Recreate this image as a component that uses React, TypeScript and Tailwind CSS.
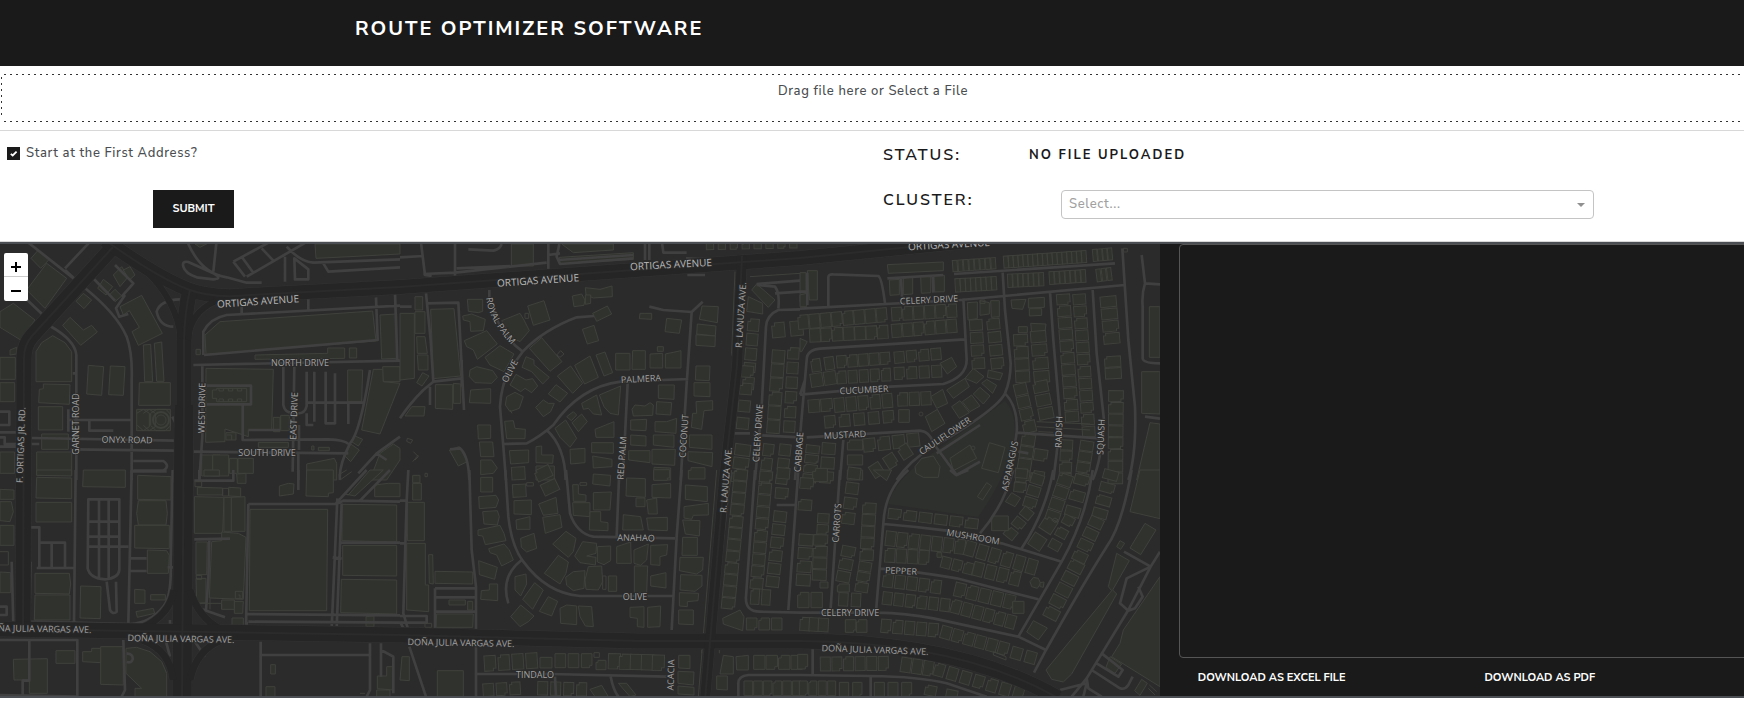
import React from "react";

type Row = [number, number, number, number, number, number, number];
interface Tile {
  x: number;
  y: number;
  shapes: string[];
  rows: Row[];
  roads: string;
  thin?: string;
}

// Each tile is drawn at three units per screen pixel.
const tiles: Tile[] = [
  {
    x: 0,
    y: 240,
    shapes: [
      "140,70 200,115 135,205 80,150",
      "40,190 105,240 62,300 0,262 0,215",
      "115,30 148,58 122,85 93,55",
      "108,425 108,335 125,308 158,287 195,308 215,335 215,425",
      "118,448 130,446 130,432 210,434 208,493 116,488",
      "115,500 188,500 188,570 115,570",
      "125,582 205,582 205,628 125,628",
      "110,636 215,636 215,706 110,706",
      "265,376 311,380 305,466 260,462",
      "331,378 375,380 370,466 326,464",
      "418,428 511,428 511,496 416,496",
      "430,315 452,313 458,425 434,425",
      "463,310 485,306 492,424 470,424",
      "210,232 250,270 275,256 292,276 242,316 188,256",
      "360,200 425,166 487,280 415,316 396,275 418,262 388,212 370,225",
      "250,160 275,180 252,206 228,184",
      "0,352 46,352 46,418 0,418",
      "0,428 44,428 44,485 0,485",
      "0,636 44,636 44,700 0,700",
      "30,330 50,322 50,342 30,345",
      "615,285 660,245 1118,213 1128,303 618,343",
      "618,385 820,388 815,570 745,570 745,590 675,567 675,605 617,607",
      "945,12 1200,12 1200,42 1050,50 948,55",
      "1140,225 1190,222 1190,355 1145,357",
      "765,345 983,340 983,324 1034,324 1034,355 765,358",
      "1048,324 1070,324 1070,354 1048,354",
      "588,328 601,328 601,344 588,344",
      "1043,390 1088,390 1085,485 1043,485",
      "1120,388 1150,388 1150,425 1200,430 1140,582 1085,570",
      "1148,380 1200,380 1200,425 1150,425",
      "410,508 511,508 511,572 410,572",
      "340,105 365,80 385,110 360,140",
      "310,118 338,140 318,165 293,145",
      "345,148 365,168 345,185 328,165",
      "370,90 390,80 405,105 388,120",
      "605,645 660,645 660,708 605,708",
      "638,645 686,645 686,708 638,708",
      "688,655 712,655 712,700 688,700",
      "714,655 760,655 760,700 714,700",
      "820,532 840,532 840,575 820,575",
      "842,526 868,526 868,572 842,572",
      "775,607 865,607 865,622 775,622",
      "678,578 708,578 708,600 678,600",
      "920,672 1003,655 1010,670 1010,720 920,720",
      "1065,588 1088,598 1075,618 1056,606",
      "1052,612 1078,630 1052,665 1035,648",
      "1140,640 1180,612 1200,625 1200,660 1160,720 1110,720",
      "955,622 988,622 988,632 955,632",
      "935,618 942,618 942,630 935,630",
      "585,12 620,12 600,22",
    ],
    rows: [],
    roads:
      "M195 90L250 140Q350 220 380 290Q398 340 395 420V720M150 258Q225 300 229 345V720M50 150L145 240M75 0L232 124M275 0L195 85M205 508V575M205 540H395M268 540V572H340M95 594L525 602M212 628L525 632M400 663H490Q512 678 490 692H400M0 515H28V555H0M0 577H60M0 592H14V612H118M0 620H50M550 80Q545 62 565 66L640 100Q670 116 640 118L590 112Q555 100 550 80M560 0Q600 100 680 112L740 128H785M650 0L640 95M700 65L820 0M740 110L930 0M700 65L735 110M725 50L760 98M785 25L820 62M855 50V125M883 55L925 88V118H885ZM860 20Q900 65 940 68L1200 58M970 70L985 95L1200 82M610 345V275Q630 235 680 225L1200 197M1128 172L1133 300L612 345M1185 160L1192 360M580 375L1200 362M607 375V590L598 720M883 380L878 695M850 380V495Q855 520 880 518M920 395V498Q915 520 895 520M943 395V545M977 395V550H1005V400M1045 490V552M920 488H1090M920 520V555H940M1110 390Q1080 580 1050 610Q1015 680 1020 720M728 495V600L985 598Q1035 600 1045 612M580 635L1045 640M620 437H753V493H620M745 570H840M1200 590L1130 640L1075 700M520 260Q480 260 470 215Q480 180 540 178M345 75L400 130L365 170M270 105L345 182M375 165L348 205L358 230L385 222M925 210V175M725 220V200M1130 640L1160 660M897 555V630M895 640V720M517 530L532 560M218 400H230",
    thin:
      "M410 520L430 508L448 520V560L430 572L412 556M430 520L448 508L466 520V560L448 572L430 556M452 520L470 508H498L511 522V558L496 572H468L452 556ZM637 450H650V445H740V485H650V475H637ZM657 445V453H670V445M685 445V453H698V445M712 445V453H725V445M657 485V477H670V485M685 485V477H698V485M712 485V477H725V485M680 585H695V600",
  },
  {
    x: 400,
    y: 240,
    shapes: [
      "0,220 43,220 43,415 0,420",
      "92,208 162,206 182,408 100,416",
      "45,170 68,170 68,210 45,210",
      "45,215 75,215 75,280 45,280",
      "50,290 75,290 82,340 52,340",
      "52,345 84,345 84,390 55,390",
      "68,398 87,408 66,438 50,428",
      "106,434 158,434 158,508 106,505",
      "160,430 182,432 182,490 160,490",
      "35,500 75,500 72,528 15,528",
      "202,178 248,178 248,214 235,218 205,214",
      "188,228 215,222 256,238 250,272 212,274 210,245 190,240",
      "305,242 360,220 372,240 388,272 360,305 330,290",
      "383,198 432,182 450,240 400,256",
      "193,302 260,272 292,312 232,358 220,330 200,320",
      "255,352 300,317 342,342 312,395 270,375",
      "388,325 425,293 486,365 450,394",
      "366,382 378,350 402,360 402,374 448,412 428,432 395,395",
      "330,435 348,403 378,420 398,416 413,438 395,458 375,445 362,455",
      "578,220 622,198 635,222 590,244",
      "547,268 582,256 596,302 562,312",
      "517,168 545,162 555,180 552,196 522,200",
      "556,143 600,148 636,138 637,170 580,174 558,165",
      "556,165 572,165 572,190 556,193",
      "334,12 400,12 400,78 334,78",
      "485,12 640,12 640,30 520,38",
      "478,52 700,38 700,58 478,72",
      "720,220 755,220 755,238 718,236",
      "800,235 845,240 838,280 795,275",
      "906,198 955,200 952,248 898,238",
      "892,252 948,258 946,288 890,282",
      "888,284 946,288 945,320 888,316",
      "472,408 512,378 548,430 518,460",
      "524,376 570,348 595,412 554,432 538,404",
      "588,345 615,336 638,398 612,408",
      "647,340 690,340 690,390 647,390",
      "698,332 736,332 736,388 696,388",
      "772,320 790,320 790,334 772,334",
      "750,342 788,340 788,384 750,384",
      "796,342 843,332 843,384 796,384",
      "210,390 230,380 278,392 292,412 275,430 225,428 208,410",
      "212,450 272,446 272,490 208,488",
      "320,470 345,457 370,470 358,505 330,515 316,495",
      "445,462 468,434 503,460 480,486",
      "407,502 430,480 445,490 463,490 452,515 430,530",
      "545,490 590,465 605,525 580,522 565,505 550,508",
      "598,465 662,438 655,525 630,520 612,500",
      "775,435 823,435 822,478 775,475",
      "770,485 815,488 812,525 768,522",
      "465,565 497,540 530,595 510,622 480,592",
      "516,548 545,522 562,545 535,575",
      "500,530 520,515 530,525 514,542",
      "314,544 340,542 345,565 376,568 375,596 320,596",
      "696,508 705,495 735,498 750,488 760,495 758,526 700,528",
      "692,540 740,538 738,572 692,570",
      "888,378 930,378 928,422 886,420",
      "882,428 930,428 930,470 882,468",
      "888,485 938,482 938,510 912,512 905,568 874,562 878,520 890,520",
      "765,545 800,545 830,535 828,580 765,575",
      "692,585 738,588 738,618 692,615",
      "760,585 822,585 822,622 760,615",
      "585,568 642,545 642,592 588,592",
      "575,608 640,608 640,640 575,638",
      "578,648 636,658 636,680 580,684",
      "510,628 555,625 555,668 512,672",
      "408,620 425,618 425,645 460,645 458,670 408,668",
      "686,632 750,632 750,668 686,660",
      "756,628 826,628 824,676 756,672",
      "868,585 936,585 936,628 868,622",
      "864,635 938,638 936,680 864,662",
      "762,682 812,684 812,720 762,720",
      "328,632 386,630 386,668 332,672",
      "408,678 463,678 463,720 408,720",
      "233,555 272,555 272,595 235,597",
      "238,606 278,606 282,650 242,650",
      "242,660 275,660 292,684 280,700 242,704",
      "1070,132 1125,180 1105,202 1055,150",
      "1045,170 1088,190 1088,222 1040,214",
      "148,630 178,620 202,665 175,678",
    ],
    rows: [
      [1060, 255, 1045, 430, 5, 36, 34],
      [1042, 395, 1028, 550, 4, 34, 36],
      [1028, 630, 1018, 710, 3, 34, 46],
      [1135, 350, 1120, 560, 6, 40, 38],
      [1180, 340, 1168, 560, 6, 34, 34],
      [1105, 630, 1095, 715, 3, 36, 32],
      [1155, 630, 1145, 715, 3, 34, 34],
      [930, 20, 1180, 15, 8, 22, 18],
      [1135, 270, 1190, 265, 2, 38, 44],
    ],
    roads:
      "M0 52L70 48M62 0L75 105L95 108M165 0V108M70 102L165 98L440 68M445 0V95M170 85L330 78M205 28L280 32Q300 28 305 12M475 60L700 45M445 45L480 40M478 12L470 50L480 72L700 55M735 0V60M748 0V60M785 0L790 38L860 38M858 55L915 58M862 105H915M78 160L92 300L100 425L185 415M80 190L175 188L192 510M185 360V440M100 425L70 450Q30 490 0 535M90 440V495M0 200H35M268 150V170L275 200Q305 290 368 335M368 335L350 360Q305 410 300 500L310 620L318 720M368 335Q430 270 530 232L582 228M310 612L380 610Q420 590 460 555Q540 440 662 425L865 417M440 570Q495 620 497 720M683 430L668 720M748 200L790 210L875 216L908 185M875 216L860 430L842 720M1200 208L1135 210Q1100 225 1098 260L1085 500L1065 720M1070 135L1125 140Q1140 160 1135 205M1070 132L1200 122M1000 580H1050M1060 585L1200 592M1195 592L1185 720M150 628L180 625Q205 645 208 720M1125 160L1200 155",
    thin:
      "M1005 95L995 340L1000 360L985 560M1050 110L1200 100M22 595L38 600L32 610L20 604ZM40 635L55 650L45 660M38 665L55 645M75 700H82V710H75ZM330 510L336 520M375 220L386 220L386 235L375 235ZM470 345L482 332L492 342L480 352Z",
  },
  {
    x: 800,
    y: 240,
    shapes: [
      "262,74 430,66 430,92 265,100",
      "22,92 52,92 52,180 28,180",
      "0,98 18,98 18,185 0,185",
      "268,120 298,118 298,164 270,166",
      "310,114 338,112 338,162 310,164",
      "362,110 392,110 392,158 364,160",
      "402,108 433,106 433,155 404,156",
      "502,188 532,186 532,236 504,240",
      "540,182 568,188 568,222 540,226",
      "572,182 598,182 598,230 574,232",
      "633,180 678,178 668,208 636,205",
      "685,175 733,172 733,202 685,204",
      "688,206 725,206 725,226 688,228",
      "655,260 682,260 682,278 655,278",
      "692,250 738,252 735,275 695,278",
      "1048,200 1080,200 1080,352 1048,352",
      "1025,395 1080,395 1080,522 1025,520",
      "1050,548 1080,552 1080,720 1010,720",
      "0,165 20,160 20,200 0,200",
      "0,295 22,305 5,335 0,335",
      "495,415 520,385 552,410 530,430",
      "565,390 608,400 600,420 562,412",
      "545,430 560,418 590,436 578,460",
      "520,462 540,442 570,468 550,492",
      "487,485 515,465 540,498 510,515",
      "455,500 480,482 508,518 478,535",
      "440,450 495,415 508,440 460,475",
      "392,470 428,448 443,490 410,505",
      "376,530 412,508 435,550 395,575",
      "420,370 455,352 470,380 442,402",
      "345,680 365,655 400,648 420,680 415,712 370,712 348,700",
      "450,655 510,615 530,655 460,692",
      "568,608 615,622 595,698 545,685",
    ],
    rows: [
      [465, 78, 580, 70, 8, 14, 34],
      [618, 66, 852, 50, 17, 14, 36],
      [885, 46, 930, 42, 4, 13, 36],
      [473, 136, 582, 130, 8, 15, 40],
      [630, 122, 724, 118, 7, 14, 40],
      [755, 114, 850, 108, 7, 14, 38],
      [896, 106, 928, 102, 3, 13, 38],
      [10, 246, 245, 225, 8, 31, 42],
      [290, 222, 455, 212, 6, 30, 40],
      [45, 286, 248, 276, 7, 32, 40],
      [290, 272, 455, 258, 6, 30, 40],
      [48, 376, 88, 370, 2, 28, 38],
      [125, 365, 255, 355, 5, 29, 36],
      [298, 352, 408, 342, 4, 30, 34],
      [50, 420, 90, 414, 2, 36, 40],
      [125, 412, 258, 404, 5, 27, 38],
      [298, 400, 410, 394, 4, 30, 36],
      [42, 498, 80, 495, 2, 34, 38],
      [118, 495, 262, 482, 5, 30, 42],
      [308, 478, 378, 475, 3, 30, 40],
      [90, 545, 265, 530, 5, 32, 36],
      [312, 528, 312, 528, 1, 32, 38],
      [528, 255, 535, 370, 4, 32, 38],
      [580, 252, 592, 370, 4, 32, 38],
      [662, 300, 668, 410, 4, 34, 42],
      [715, 290, 725, 410, 4, 34, 46],
      [662, 448, 688, 560, 4, 34, 38],
      [722, 440, 738, 520, 3, 34, 44],
      [790, 178, 816, 530, 11, 31, 40],
      [838, 178, 866, 575, 12, 31, 38],
      [925, 185, 935, 295, 4, 32, 48],
      [938, 365, 940, 400, 2, 34, 48],
      [948, 468, 946, 715, 8, 34, 44],
      [800, 615, 795, 715, 4, 32, 36],
      [860, 618, 845, 715, 4, 32, 40],
      [685, 600, 668, 710, 4, 34, 40],
      [722, 645, 712, 710, 2, 34, 40],
      [38, 628, 28, 715, 4, 24, 40],
      [86, 626, 80, 712, 3, 34, 40],
      [165, 615, 165, 705, 3, 30, 46],
      [208, 615, 340, 600, 4, 36, 40],
      [230, 690, 315, 635, 3, 34, 40],
    ],
    roads:
      "M85 200V112Q85 102 100 103L235 108Q245 112 255 190M0 206L480 180L975 135M262 115L430 105M303 115L306 170M398 108L400 158M462 102L945 70M608 98L615 210L632 370Q632 420 615 460M490 175L500 360Q500 410 430 432L270 440L0 464M495 298L60 326Q20 330 20 360L0 590M0 464L15 420M750 155L760 300L780 530L770 640L760 720M878 150L890 340L912 540Q905 660 878 720M967 25L985 300L1005 500Q1010 640 985 720M1025 45L1035 130L1080 133M1035 130Q1025 160 1028 200V355Q1030 370 1080 370M1035 530L1080 536M20 592L360 572Q390 575 400 610L470 705L540 665M130 600L120 720M615 460Q590 510 400 620Q330 660 290 720M615 460Q655 500 650 578L900 595M650 578L640 640M655 635L685 640M410 640L540 555M22 98V195M18 155L0 155",
    thin:
      "M970 25H982V36H970ZM710 545L870 552M710 560L870 570M715 575L760 577M540 180H555V190H540Z",
  },
  {
    x: 0,
    y: 470,
    shapes: [
      "250,0 376,0 376,52 248,50",
      "110,22 215,24 215,86 108,84",
      "108,97 215,97 215,156 108,156",
      "105,310 208,310 212,342 208,372 105,370",
      "105,375 210,375 210,450 103,450",
      "242,348 303,350 301,446 240,444",
      "110,0 215,0 215,18 110,16",
      "413,16 513,20 513,90 413,88",
      "415,92 498,92 502,130 498,165 415,165 410,130",
      "404,166 508,166 508,236 404,234",
      "442,240 500,242 508,256 505,310 442,310",
      "404,358 435,360 435,400 404,400",
      "452,374 496,374 496,390 452,390",
      "408,425 460,415 464,430 412,442",
      "0,58 42,60 42,88 0,88",
      "0,95 34,95 40,125 30,155 0,152",
      "0,166 42,166 42,226 0,226",
      "0,306 32,308 32,368 0,368",
      "583,80 672,82 668,190 583,190",
      "672,82 694,82 694,184 672,184",
      "694,82 735,80 735,184 694,184",
      "592,52 668,54 668,75 592,75",
      "686,52 722,54 722,80 686,78",
      "635,215 665,212 665,186 715,190 738,202 730,388 628,384",
      "588,216 622,216 620,314 588,314",
      "588,325 618,325 618,398 590,400",
      "750,118 983,118 980,422 748,422",
      "1026,103 1190,105 1190,216 1026,212",
      "1028,226 1190,226 1190,318 1028,316",
      "1024,328 1190,330 1190,432 1022,428",
      "838,48 865,40 882,42 880,72 838,78",
      "920,0 1000,0 1000,68 985,70 985,80 918,78",
      "1045,75 1110,0 1150,0 1065,78 1035,72",
      "1124,45 1165,40 1200,40 1200,80 1124,80",
      "696,444 730,444 730,476 696,474",
      "703,394 730,394 728,430 703,430",
      "665,390 703,390 703,418 665,418",
      "1098,440 1122,438 1122,470 1098,470",
      "378,535 410,532 450,545 485,575 500,610 500,680 405,680 405,655 425,655 378,610",
      "302,530 370,530 370,645 302,643",
      "248,545 275,545 275,535 302,535 302,578 248,575",
      "168,542 225,542 225,580 168,580",
      "40,568 142,566 142,670 88,670 88,630 42,630",
      "812,584 826,584 826,612 812,612",
      "798,650 825,650 825,680 798,680",
      "1132,618 1160,618 1160,590 1180,590 1180,660 1132,656",
      "1130,660 1170,660 1170,680 1130,680",
      "612,0 658,0 658,18 612,18",
      "710,12 738,10 738,40 712,40",
    ],
    rows: [],
    roads:
      "M227 0L222 460M395 0L385 460L385 480M395 4H500M265 88H358V300Q355 325 315 328Q270 325 263 295ZM297 88V325M326 88V325M265 155H358M265 200H358M265 230H385M320 335L330 420Q338 435 350 425L348 335M92 172H118V290M118 218H195V290M155 218V290M110 294H222M92 275L88 460M35 275L40 460M0 410H20V435H0M390 265H440M390 303H440M518 0L512 280Q515 380 490 410Q450 460 390 462L90 455M583 208L690 206M628 210L625 330L618 420M583 32H700V0M598 0V30M745 102H1010L1030 92L1200 95M745 102L738 475M1012 85L995 475M1025 100L1010 475M740 432L1200 436M745 455L1200 458M1018 218H1200M998 262L1025 266M1008 100L1100 0M1080 92L1170 0M895 0V60M0 510H232V680M88 510V632H68V680M370 510L375 660L365 680M380 550Q400 552 398 568Q395 580 380 576M782 515V680M785 555H1108M1110 520V660L1100 680M1143 520V620M1143 540L1180 560V670M0 675L230 680M585 410L675 442M503 292H520M510 450V480M740 455V480M498 515L510 560M585 515L615 560",
    thin:
      "M585 35H605V50H585ZM668 55H686V78H668ZM588 316H605V328H590ZM595 400H665V418M630 385V418M706 364H728V386H706ZM0 245H25V285H0M1015 15L1040 0M1020 30L1055 5M1080 670H1095M715 375H720V386",
  },
  {
    x: 400,
    y: 470,
    shapes: [
      "22,97 73,97 73,212 22,212",
      "20,220 76,220 76,345 86,345 86,425 20,420",
      "38,40 64,40 64,90 38,90",
      "38,16 60,16 60,38 38,38",
      "86,254 98,254 100,342 88,340",
      "105,304 218,306 218,342 105,340",
      "110,432 220,432 218,472 108,472",
      "147,390 196,390 196,405 147,405",
      "203,394 218,394 218,420 203,420",
      "112,602 190,602 190,680 112,680",
      "6,560 28,560 28,632 0,630",
      "242,22 278,22 278,66 242,66",
      "236,80 288,76 296,90 288,112 238,116",
      "248,125 292,122 298,140 292,165 252,162",
      "234,180 300,166 312,190 318,212 256,224 248,198 234,196",
      "266,236 312,222 328,240 340,270 305,288 290,255 270,248",
      "236,272 292,292 284,328 238,314",
      "244,362 268,360 268,342 293,342 293,392 242,388",
      "342,92 394,90 394,134 342,132",
      "348,150 390,140 390,178 350,178",
      "362,205 402,190 410,235 380,246 364,232",
      "416,102 468,82 474,130 430,136",
      "428,142 480,134 486,172 436,190",
      "458,222 498,184 528,205 520,245 505,262",
      "433,310 475,256 505,276 498,310 480,342",
      "345,320 378,312 380,342 362,378 345,360",
      "404,338 430,360 398,418 368,388",
      "445,380 473,394 455,438 418,424",
      "332,440 362,405 402,438 385,455 360,470",
      "524,258 548,215 590,220 588,250 560,258 588,262 586,285 540,278",
      "592,230 632,228 632,272 612,284 592,276",
      "497,322 520,305 555,302 552,355 520,362 500,346",
      "555,330 565,290 605,288 608,335 595,360 558,358",
      "625,318 650,318 650,364 625,364",
      "480,415 500,405 530,408 530,464 482,460",
      "535,408 575,410 580,470 556,468 540,440",
      "650,230 692,216 694,280 650,280",
      "702,240 745,222 740,270 722,286 702,280",
      "752,226 803,224 800,255 780,260 780,286 752,284",
      "703,288 743,288 740,370 703,368",
      "752,318 798,308 798,354 752,348",
      "690,412 732,410 732,472 712,470 712,445 690,442",
      "743,412 782,408 780,470 743,472",
      "680,24 736,26 736,82 678,78",
      "756,44 812,40 812,84 756,82",
      "708,84 735,84 735,110 708,110",
      "740,90 770,84 772,132 745,132",
      "670,134 722,140 730,180 668,180",
      "740,144 802,142 802,182 745,180",
      "518,44 535,44 535,72 558,75 558,94 520,94",
      "518,98 570,98 570,140 520,136",
      "580,68 634,66 630,120 580,120",
      "570,125 602,125 602,155 624,158 624,182 568,180",
      "580,12 632,16 630,48 578,42",
      "856,45 922,50 922,95 856,88",
      "852,110 925,100 925,135 880,136 875,148 852,144",
      "848,150 900,152 898,198 856,192",
      "848,202 892,202 892,256 846,256",
      "840,262 910,262 908,300 890,312 838,302",
      "842,314 906,316 906,348 885,364 840,360",
      "838,368 896,370 894,392 862,395 862,410 838,408",
      "836,420 880,420 880,464 836,462",
      "968,445 1020,420 1032,440 1028,482 970,462",
      "836,556 870,556 870,596 836,594",
      "834,604 882,606 880,645 834,640",
      "834,648 882,652 882,675 834,672",
      "570,658 605,646 625,680 585,680",
      "655,640 680,640 708,675 690,680",
      "970,556 1000,560 1000,612 960,612",
      "950,618 982,618 982,660 950,658",
      "1008,560 1045,556 1045,600 1010,600",
    ],
    rows: [
      [355, 10, 358, 62, 2, 38, 40],
      [430, 10, 450, 52, 2, 36, 48],
      [270, 580, 395, 572, 4, 34, 46],
      [438, 578, 438, 578, 1, 36, 32],
      [481, 572, 560, 572, 3, 32, 42],
      [603, 585, 603, 585, 1, 30, 28],
      [643, 574, 775, 578, 5, 36, 46],
      [265, 660, 345, 655, 3, 32, 38],
      [428, 655, 545, 658, 4, 30, 40],
      [1022, 15, 985, 400, 12, 36, 40],
      [1098, 20, 1070, 340, 10, 32, 38],
      [1150, 10, 1145, 70, 2, 32, 38],
      [1140, 140, 1118, 335, 6, 32, 38],
      [1065, 380, 1098, 382, 2, 26, 46],
      [1055, 462, 1130, 462, 3, 32, 36],
      [1078, 577, 1190, 577, 4, 34, 42],
      [1045, 655, 1190, 655, 6, 26, 44],
      [890, 10, 890, 10, 1, 50, 34],
      [785, 15, 785, 15, 1, 48, 32],
    ],
    roads:
      "M208 0L215 240L228 350V680M0 92H20L25 0M20 92L10 430L28 490M0 220H15M28 530L78 680M105 355H228M105 382H228M105 425H228M105 355V475M0 438H80V458H0M316 0L325 140Q335 230 370 275Q440 370 540 378L820 378M365 270Q300 320 325 400M498 0L510 130Q530 190 580 200L825 205M658 0L650 198M845 0L830 200L815 480M228 612L450 612L800 620M465 620L468 680M632 620Q640 660 655 680M1065 0L1038 380Q1035 425 1080 425L1200 428M1195 0L1165 420M1130 105H1190M1200 615H1045Q1015 618 1015 640V680M0 455L18 490",
    thin:
      "M950 0L895 680M995 0L945 430M380 38H400V48H380ZM540 38H560V46H540ZM582 548H598V562H582ZM75 460H95V472H75ZM905 490V500M905 540V550M958 490V500M958 540V550M608 318H618V358H608Z",
  },
  {
    x: 800,
    y: 470,
    shapes: [
      "1020,0 1080,0 1080,146 990,125",
      "1035,160 1068,180 1022,254 990,234",
      "960,212 974,220 962,238 950,230",
      "950,250 988,272 938,360 950,372 815,612 790,636 755,628 738,600 935,362 925,350",
      "1080,320 1080,650 935,560 960,520 970,480",
      "930,560 965,582 945,610 918,592",
      "560,38 575,48 548,90 532,80",
      "690,335 700,322 715,325 722,340 712,355 695,350",
      "720,338 732,336 730,352 720,350",
      "700,452 742,474 715,510 680,486",
      "1025,628 1042,640 1020,676 1004,662",
      "635,68 662,84 645,110 616,95",
      "220,0 275,0 260,32",
    ],
    rows: [
      [60, 15, 60, 40, 1, 40, 44],
      [20, 40, 15, 105, 2, 32, 40],
      [70, 145, 68, 178, 2, 28, 34],
      [162, 10, 145, 145, 4, 34, 38],
      [208, 115, 200, 255, 5, 32, 40],
      [62, 210, 58, 315, 4, 32, 42],
      [18, 210, 10, 330, 4, 34, 42],
      [72, 345, 72, 345, 1, 24, 18],
      [10, 390, 50, 390, 2, 34, 46],
      [145, 245, 130, 320, 3, 32, 40],
      [195, 290, 185, 352, 3, 28, 38],
      [130, 388, 168, 390, 2, 28, 40],
      [130, 354, 130, 354, 1, 36, 24],
      [284, 132, 515, 160, 6, 38, 30],
      [272, 206, 480, 230, 7, 30, 44],
      [510, 236, 695, 290, 6, 30, 44],
      [270, 256, 372, 262, 4, 30, 42],
      [418, 255, 418, 255, 1, 14, 14],
      [438, 278, 505, 295, 3, 28, 34],
      [535, 298, 645, 325, 4, 30, 42],
      [264, 332, 408, 350, 5, 30, 40],
      [480, 360, 628, 395, 5, 32, 42],
      [655, 412, 655, 412, 1, 34, 36],
      [262, 385, 435, 405, 6, 28, 38],
      [468, 410, 632, 455, 6, 28, 40],
      [258, 468, 400, 480, 5, 29, 40],
      [438, 488, 610, 535, 6, 30, 38],
      [650, 550, 692, 562, 2, 32, 36],
      [15, 462, 70, 465, 3, 30, 40],
      [152, 468, 185, 468, 2, 32, 38],
      [76, 582, 250, 580, 6, 30, 42],
      [318, 585, 385, 595, 3, 30, 44],
      [418, 600, 655, 670, 7, 30, 38],
      [10, 655, 95, 655, 4, 24, 44],
      [132, 658, 172, 658, 2, 28, 42],
      [238, 658, 320, 658, 3, 30, 42],
      [392, 662, 455, 675, 2, 34, 30],
      [8, 575, 8, 575, 1, 30, 44],
      [664, 10, 660, 52, 2, 28, 36],
      [712, 28, 690, 98, 3, 30, 38],
      [795, 30, 758, 140, 4, 34, 42],
      [845, 30, 818, 125, 3, 30, 44],
      [680, 130, 632, 190, 3, 30, 34],
      [600, 160, 600, 160, 1, 50, 44],
      [745, 165, 712, 215, 2, 42, 42],
      [805, 152, 765, 225, 3, 28, 34],
      [932, 15, 900, 130, 4, 28, 44],
      [888, 158, 840, 260, 4, 30, 42],
      [828, 290, 755, 430, 5, 32, 44],
    ],
    roads:
      "M120 0L92 415M0 428L230 428Q320 430 400 445L655 500L738 540M325 0Q255 60 250 160L228 425M252 162Q350 170 440 182L605 220L785 275M240 296Q320 300 470 325L715 388M640 0Q610 110 540 190M760 0Q735 130 665 235M878 0Q860 140 785 275L655 500M995 0Q965 170 920 230Q850 340 738 540L702 608M972 245L1052 290L1080 245M1052 290L985 420L860 625L815 680M1052 290L980 325L960 400L985 422L1005 415L1028 380L1015 350M905 550L968 600L955 620L890 580M875 600L960 655Q975 660 985 645L998 620M780 660L860 640L850 680M860 625L865 655L905 680M38 510V612M0 615L210 618Q360 620 440 640L560 680M212 618V680M450 0L468 15L505 0",
    thin:
      "M580 545L618 560V570L580 555ZM1048 645L1070 665M1045 655L1065 675M755 150L765 158L775 150L765 144Z",
  },
];

const majors: { d: string; w: number }[] = [
  { d: "M113 247L32 336Q24 345 24 358L23 632", w: 15 },
  { d: "M105 240C130 258 160 278 187 289Q213 299 250 295L400 287L800 258L980 240", w: 14 },
  { d: "M190 290Q185 310 184 340L184 410", w: 15 },
  { d: "M184 405L182 700", w: 19 },
  { d: "M147 272Q176 300 181 338", w: 6 },
  { d: "M216 301Q190 312 188 340", w: 6 },
  { d: "M142 628Q170 615 174 590M222 630Q198 618 190 590M142 640Q170 650 173 680M222 640Q196 650 190 680", w: 7 },
  { d: "M0 629L400 635L640 641L800 641Q960 642 1058 698", w: 15 },
  { d: "M742 256L737 366L724 480L705 700", w: 10 },
];

const labels: [string, number, number, number, boolean?][] = [
  ["ORTIGAS AVENUE", 258, 302, -4, true],
  ["ORTIGAS AVENUE", 538, 281, -4, true],
  ["ORTIGAS AVENUE", 671, 265, -3, true],
  ["ORTIGAS AVENUE", 949, 245, -3, true],
  ["NORTH DRIVE", 300, 363, 0],
  ["SOUTH DRIVE", 267, 453, 0],
  ["ONYX ROAD", 127, 440, 1],
  ["WEST DRIVE", 202, 408, -89],
  ["EAST DRIVE", 294, 416, -88],
  ["GARNET ROAD", 76, 424, -90],
  ["F. ORTIGAS JR. RD.", 21, 445, -88],
  ["OLIVE", 510, 371, -62],
  ["PALMERA", 641, 379, -3],
  ["RED PALM", 622, 458, -86],
  ["COCONUT", 684, 436, -86],
  ["R. LANUZA AVE.", 741, 315, -86],
  ["R. LANUZA AVE.", 726, 480, -85],
  ["CELERY DRIVE", 929, 300, -3],
  ["CELERY DRIVE", 758, 433, -86],
  ["CELERY DRIVE", 850, 613, 0],
  ["CUCUMBER", 864, 390, -3],
  ["MUSTARD", 845, 435, -3],
  ["CAULIFLOWER", 945, 436, -34],
  ["CABBAGE", 799, 452, -86],
  ["CARROTS", 837, 523, -86],
  ["ASPARAGUS", 1010, 466, -78],
  ["RADISH", 1059, 432, -88],
  ["SQUASH", 1101, 437, -88],
  ["MUSHROOM", 973, 537, 10],
  ["PEPPER", 901, 571, 3],
  ["ANAHAO", 636, 538, 1],
  ["OLIVE", 635, 597, 0],
  ["TINDALO", 535, 675, 0],
  ["ACACIA", 671, 675, -88],
  ["DOÑA JULIA VARGAS AVE.", 38, 629, 1],
  ["DOÑA JULIA VARGAS AVE.", 181, 639, 1],
  ["DOÑA JULIA VARGAS AVE.", 461, 643, 1],
  ["DOÑA JULIA VARGAS AVE.", 875, 650, 2],
];

function housesAlong([x1, y1, x2, y2, count, w, h]: Row, seed: number) {
  const steep = Math.abs(y2 - y1) > Math.abs(x2 - x1);
  const angle = (Math.atan2(y2 - y1, x2 - x1) * 180) / Math.PI;
  const turn = count === 1 ? 0 : steep ? angle - 90 : angle;
  return Array.from({ length: count }, (_, i) => {
    const t = count === 1 ? 0 : i / (count - 1);
    const kind = (seed * 5 + i * 3) % 4;
    const across = steep ? h : w;
    const gap = count === 1 ? h : Math.hypot(x2 - x1, y2 - y1) / (count - 1) - 3;
    const down = steep ? Math.min(w, gap) : h;
    const a = across / 2;
    const b = down / 2;
    const notch = w < 18 ? 0 : Math.round(Math.min(a, b) * 0.45);
    const d =
      kind === 1 && notch
        ? `M${-a} ${-b + notch}H${-a + notch}V${-b}H${a}V${b}H${-a}Z`
        : kind === 2 && notch
          ? `M${-a} ${-b}H${a}V${b - notch}H${a - notch}V${b}H${-a}Z`
          : `M${-a} ${-b}H${a}V${b}H${-a}Z`;
    return (
      <path
        key={i}
        d={d}
        transform={`translate(${x1 + (x2 - x1) * t} ${y1 + (y2 - y1) * t}) rotate(${turn})`}
      />
    );
  });
}

function StreetMap() {
  return (
    <svg
      viewBox="0 244 1160 452"
      preserveAspectRatio="xMinYMin slice"
      className="block h-full w-full bg-[#2b2b2b]"
      role="img"
      aria-label="Street map"
    >
      <path
        d="M1005 401Q1018 415 1014 440Q1005 480 978 517L888 504Q895 480 930 455Z"
        fill="#2e302d"
      />
      {tiles.map((t, n) => (
        <g
          key={n}
          transform={`translate(${t.x} ${t.y}) scale(0.33333)`}
          fill="#30322d"
          stroke="#3f413c"
          strokeWidth="3"
        >
          {t.shapes.map((p) => (
            <polygon key={p} points={p} />
          ))}
          {t.rows.map((r, i) => (
            <g key={i}>{housesAlong(r, i + n)}</g>
          ))}
        </g>
      ))}
      <g fill="none" stroke="#3d3f3a">
        <circle cx="161" cy="420" r="8" strokeWidth="2" />
        <circle cx="161" cy="420" r="5" />
        <circle cx="921" cy="414" r="2" />
        <circle cx="973" cy="448" r="2" />
      </g>
      {tiles.map((t, n) => (
        <g key={n} transform={`translate(${t.x} ${t.y}) scale(0.33333)`} fill="none">
          <path d={t.roads} stroke="#404040" strokeWidth="8" strokeLinejoin="round" />
          {t.thin && <path d={t.thin} stroke="#3f413c" strokeWidth="3" />}
        </g>
      ))}
      <g fill="none">
        {majors.map((m) => (
          <path key={m.d} d={m.d} stroke="#333333" strokeWidth={m.w + 1} />
        ))}
        {majors.map((m) => (
          <path key={m.d} d={m.d} stroke="#252525" strokeWidth={m.w} />
        ))}
        {majors
          .filter((m) => m.w > 9)
          .map((m) => (
            <path key={m.d} d={m.d} stroke="#2b2b2b" strokeWidth="2" />
          ))}
      </g>
      <g
        fill="#a0a0a0"
        stroke="#2b2b2b"
        strokeWidth="2"
        paintOrder="stroke"
        textAnchor="middle"
        className="font-['Open_Sans','Noto_Sans',sans-serif]"
      >
        {labels.map(([text, x, y, turn, bright], i) => (
          <text
            key={i}
            transform={`translate(${x} ${y}) rotate(${turn})`}
            y="3"
            fontSize={bright ? 10 : 9}
            fill={bright ? "#b8b8b8" : undefined}
          >
            {text}
          </text>
        ))}
        <path id="royal-palm" d="M486 298Q490 325 517 350" fill="none" stroke="none" />
        <text textAnchor="start" fontSize="9">
          <textPath href="#royal-palm">ROYAL PALM</textPath>
        </text>
      </g>
    </svg>
  );
}

export default function App() {
  return (
    <div className="overflow-x-hidden bg-white font-['Nunito_Sans','Nunito','Open_Sans',sans-serif] text-[#1a1a1a]">
      <header className="h-[66px] bg-[#1a1a1a] pl-[355px] pt-[13px]">
        <h1 className="text-xl leading-8 font-bold tracking-[2px] text-white">
          ROUTE OPTIMIZER SOFTWARE
        </h1>
      </header>

      <div className="-mr-2 pt-2 pl-px">
        <label className="block h-12 cursor-pointer bg-[repeating-linear-gradient(90deg,#333_0_2px,transparent_2px_6px),repeating-linear-gradient(90deg,#333_0_2px,transparent_2px_6px),repeating-linear-gradient(180deg,#333_0_2px,transparent_2px_6px)] bg-[length:calc(100%-6px)_1px,calc(100%-6px)_1px,1px_calc(100%-6px)] bg-[position:3px_0,3px_100%,0_3px] bg-no-repeat pt-[9px] pr-[7px] text-center text-[13px] leading-4 font-medium tracking-wider text-[#4a4d50]">
          Drag file here or <span>Select a File</span>
          <input type="file" className="sr-only" />
        </label>
      </div>

      <hr className="mt-2 border-[#d8d8d8]" />

      <main>
        <div className="grid h-[110px] grid-cols-2">
          <form className="pt-3" onSubmit={(e) => e.preventDefault()}>
            <label className="flex items-center gap-[6px] pl-[7px] text-[13px] leading-5 font-medium tracking-wider text-[#4a4d50]">
              <span className="relative flex size-[13px]">
                <input
                  type="checkbox"
                  defaultChecked
                  className="peer size-[13px] appearance-none border border-[#1a1a1a] checked:bg-[#1a1a1a]"
                />
                <svg
                  viewBox="0 0 13 13"
                  className="pointer-events-none absolute inset-0 hidden peer-checked:block"
                  fill="none"
                  stroke="#fff"
                  strokeWidth="1.8"
                >
                  <path d="M3.8 6.8L5.7 8.5L9.6 4.6" />
                </svg>
              </span>
              Start at the First Address?
            </label>
            <button
              type="submit"
              className="mt-[27px] ml-[153px] block h-[38px] w-[81px] bg-[#1a1a1a] pt-px text-[11px] font-bold text-white"
            >
              SUBMIT
            </button>
          </form>

          <div className="pt-3 pl-[11px]">
            <div className="flex h-[45px] items-start">
              <h2 className="w-[146px] text-base leading-6 font-semibold tracking-[2px]">STATUS:</h2>
              <p className="text-[13px] leading-6 font-bold tracking-[2px]">NO FILE UPLOADED</p>
            </div>
            <div className="flex items-start">
              <label
                htmlFor="cluster"
                className="w-[178px] text-base leading-6 font-semibold tracking-[2px]"
              >
                CLUSTER:
              </label>
              <div className="relative mt-[2px] mr-[150px] flex-1">
                <select
                  id="cluster"
                  defaultValue=""
                  className="block h-[29px] w-full appearance-none rounded border border-[#c4c4c4] bg-white px-[7px] text-[13px] font-medium tracking-wider text-[#a0a0a0]"
                >
                  <option value="">Select...</option>
                </select>
                <svg
                  viewBox="0 0 8 4"
                  className="pointer-events-none absolute top-[13px] right-[9px] h-1 w-2"
                  fill="#909090"
                >
                  <path d="M0 0H8L4 4Z" />
                </svg>
              </div>
            </div>
          </div>
        </div>

        <hr className="border-[#d8d8d8]" />

        <section className="flex h-[456px] border-y-2 border-[#4b4f53] bg-[#1a1a1a]">
          <div className="relative w-[66.5%] overflow-hidden">
            <StreetMap />
            <div className="absolute top-[9px] left-1 w-6 overflow-hidden rounded-[2px] bg-white">
              <button
                type="button"
                aria-label="Zoom in"
                className="flex h-6 w-6 items-center justify-center border-b border-[#ccc] text-black"
              >
                <svg viewBox="0 0 10 10" className="mt-1 size-[10px]" stroke="currentColor" strokeWidth="2">
                  <path d="M5 0V10M0 5H10" />
                </svg>
              </button>
              <button
                type="button"
                aria-label="Zoom out"
                className="flex h-6 w-6 items-center justify-center text-black"
              >
                <svg viewBox="0 0 10 10" className="mt-1 size-[10px]" stroke="currentColor" strokeWidth="2">
                  <path d="M0 5H10" />
                </svg>
              </button>
            </div>
          </div>

          <div className="-mr-2 ml-[19px] flex-1">
            <div className="h-[414px] rounded border border-[#555]" />
            <div className="grid grid-cols-2 text-[11px] leading-[38px] font-bold text-white">
              <button type="button" className="pt-px pl-[19px] text-left">
                DOWNLOAD AS EXCEL FILE
              </button>
              <button type="button" className="pt-px pl-[19px] text-left">
                DOWNLOAD AS PDF
              </button>
            </div>
          </div>
        </section>
      </main>
      <div className="h-7" />
    </div>
  );
}
